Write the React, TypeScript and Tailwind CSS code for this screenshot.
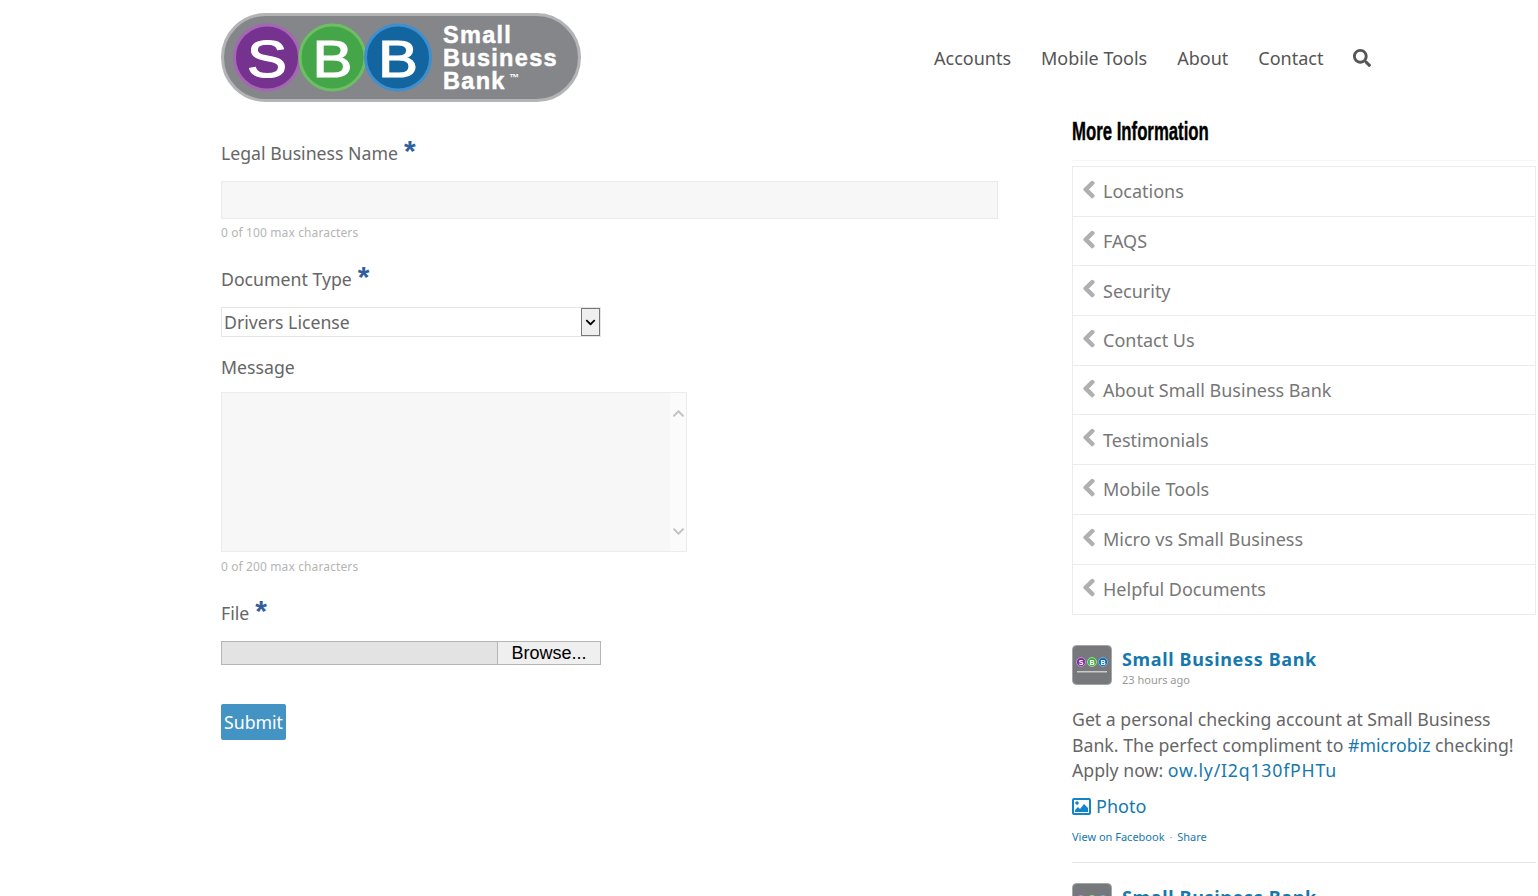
import { FaChevronLeft, FaChevronDown, FaChevronUp, FaSearch } from "react-icons/fa";

const navItems = ["Accounts", "Mobile Tools", "About", "Contact"];
const sideLinks = [
  "Locations",
  "FAQS",
  "Security",
  "Contact Us",
  "About Small Business Bank",
  "Testimonials",
  "Mobile Tools",
  "Micro vs Small Business",
  "Helpful Documents",
];

function Logo() {
  const circles = [
    { cx: 46, fill: "#75328f", ring: "#a765b5", letter: "S" },
    { cx: 111.5, fill: "#44a648", ring: "#6cc063", letter: "B" },
    { cx: 177, fill: "#12659f", ring: "#3f8fcf", letter: "B" },
  ];
  return (
    <svg width="360" height="89" viewBox="0 0 360 89" className="block">
      <rect x="1.5" y="1.5" width="357" height="86" rx="43" fill="#848689" stroke="#b3b4b6" strokeWidth="3" />
      {circles.map((c) => (
        <g key={c.cx}>
          <circle cx={c.cx} cy="44.5" r="32.5" fill={c.fill} stroke={c.ring} strokeWidth="3" />
          <text
            x={c.cx}
            y="63.5"
            textAnchor="middle"
            fontFamily="'Liberation Sans', sans-serif"
            fontSize="52"
            fill="#fff"
            stroke="#fff"
            strokeWidth="1.2"
            textLength="40"
            lengthAdjust="spacingAndGlyphs"
          >
            {c.letter}
          </text>
        </g>
      ))}
      <g fontFamily="'Liberation Sans', sans-serif" fontWeight="700" fontSize="23.5" letterSpacing="1.3" fill="#fff" stroke="#fff" strokeWidth="0.5">
        <text x="222" y="30">Small</text>
        <text x="222" y="53">Business</text>
        <text x="222" y="75.5">Bank</text>
      </g>
      <text x="288" y="68" fontFamily="'Liberation Sans', sans-serif" fontWeight="700" fontSize="10" fill="#fff">™</text>
    </svg>
  );
}

function Avatar() {
  return (
    <svg width="40" height="40" viewBox="0 0 40 40" className="block shrink-0">
      <rect x="0.5" y="0.5" width="39" height="39" rx="4" fill="#77787b" stroke="#a5a6a8" />
      <g fontFamily="'Liberation Sans', sans-serif" fontSize="7" fontWeight="700" fill="#fff" textAnchor="middle">
        <circle cx="9" cy="17" r="4.5" fill="#75328f" stroke="#c98ad6" />
        <text x="9" y="19.5">S</text>
        <circle cx="20" cy="17" r="4.5" fill="#44a648" stroke="#9be08f" />
        <text x="20" y="19.5">B</text>
        <circle cx="31" cy="17" r="4.5" fill="#12659f" stroke="#6cb5e8" />
        <text x="31" y="19.5">B</text>
      </g>
      <rect x="5" y="26" width="30" height="1.5" fill="#c9cacc" />
    </svg>
  );
}

function PhotoIcon() {
  return (
    <svg width="19" height="17" viewBox="0 0 19 17" className="mr-[5px] block shrink-0">
      <rect x="1" y="1" width="17" height="15" rx="1" fill="none" stroke="#1384c9" strokeWidth="2" />
      <circle cx="5" cy="5" r="1.8" fill="#1384c9" />
      <path d="M3 14 L3 12 L6 9 L8 11 L12 6 L16 10 L16 14 Z" fill="#1384c9" />
    </svg>
  );
}

function Label({ text, required }: { text: string; required?: boolean }) {
  return (
    <label className="flex items-start text-[17.7px] leading-[26px] text-[#666]">
      <span className="mt-[4px]">{text}</span>
      {required && (
        <span className="ml-[6px] h-[28px] font-['Liberation_Sans',sans-serif] text-[30px] font-bold leading-[30px] text-[#2f5f9e]">
          *
        </span>
      )}
    </label>
  );
}

function Hint({ text, className }: { text: string; className: string }) {
  return <p className={`${className} text-[12px] leading-[16px] tracking-[0.12px] text-[#b5b5b5]`}>{text}</p>;
}

export default function App() {
  return (
    <div className="h-[896px] overflow-hidden bg-white pl-[221px] font-['Noto_Sans',sans-serif] text-[#666]">
      <header className="flex h-[115px] items-start pt-[13px]">
        <Logo />
        <nav className="ml-[353px] mt-[31px] flex items-center text-[18px] leading-[28px] text-[#555]">
          {navItems.map((item) => (
            <a key={item} className="mr-[30px]">{item}</a>
          ))}
          <FaSearch className="h-[18px] w-[18px] text-[#555]" />
        </nav>
      </header>

      <main className="flex">
        <form className="w-[777px] shrink-0 pt-[21px]">
          <Label text="Legal Business Name" required />
          <input className="mt-[15px] block h-[38px] w-full border border-[#eaeaea] bg-[#f7f7f7]" />
          <Hint text="0 of 100 max characters" className="mt-[6px]" />

          <div className="mt-[21px]">
            <Label text="Document Type" required />
          </div>
          <div className="mt-[15px] flex h-[30px] w-[380px] items-center border border-[#e5e5e5]">
            <select className="h-full min-w-0 flex-1 appearance-none bg-white pl-[2px] text-[17.7px] text-[#666]">
              <option>Drivers License</option>
            </select>
            <span className="flex h-[28px] w-[19px] items-center justify-center border border-[#777] bg-[#efefef]">
              <FaChevronDown className="h-[11px] w-[11px] text-black" />
            </span>
          </div>

          <div className="mt-[13px]">
            <Label text="Message" />
          </div>
          <div className="mt-[12px] flex h-[160px] w-[466px] border border-[#ececec]">
            <textarea className="h-full min-w-0 flex-1 resize-none bg-[#f7f7f7]" />
            <div className="flex w-[16px] flex-col items-center justify-between bg-[#fbfbfb] pb-[13px] pt-[14px]">
              <FaChevronUp className="h-[13px] w-[13px] text-[#c4c4c4]" />
              <FaChevronDown className="h-[13px] w-[13px] text-[#c4c4c4]" />
            </div>
          </div>
          <Hint text="0 of 200 max characters" className="mt-[7px]" />

          <div className="mt-[21px]">
            <Label text="File" required />
          </div>
          <div className="mt-[15px] flex h-[24px] w-[380px] border border-[#b5b5b5]">
            <div className="flex-1 bg-[#e3e3e3]" />
            <button type="button" className="w-[103px] border-l border-[#b5b5b5] bg-[#efefef] font-['Liberation_Sans',sans-serif] text-[18px] leading-[22px] text-black">
              Browse...
            </button>
          </div>

          <button type="button" className="mt-[39px] block h-[36px] w-[65px] rounded-[2px] bg-[#4394c4] text-[17.7px] text-white">
            Submit
          </button>
        </form>

        <aside className="ml-[74px] w-[464px] shrink-0">
          <h2 className="mt-[1px] h-[31px] origin-left scale-x-[0.67] whitespace-nowrap font-['Liberation_Sans',sans-serif] text-[25px] font-bold leading-[31px] text-black [-webkit-text-stroke:0.4px_black]">
            More Information
          </h2>
          <div className="mt-[13px] border-t border-[#f6f6f6] pt-[5px]">
            <ul className="border border-[#ececec]">
              {sideLinks.map((link) => (
                <li key={link} className="flex h-[49.7px] items-center border-b border-[#ececec] pl-[9px] pt-[1px] text-[18px] text-[#777] last:border-b-0">
                  <FaChevronLeft className="mr-[7px] mt-[-5px] h-[19px] w-[14px] stroke-[40px] text-[#b0b0b0]" />
                  {link}
                </li>
              ))}
            </ul>
          </div>

          <article className="mt-[30px] border-b border-[#e5e5e5] pb-[17px]">
            <div className="flex">
              <Avatar />
              <div className="ml-[10px]">
                <p className="mt-[-1px] text-[18px] font-bold leading-[30px] tracking-[0.65px] text-[#1678ad]">Small Business Bank</p>
                <p className="text-[11px] leading-[12px] text-[#999]">23 hours ago</p>
              </div>
            </div>
            <p className="mt-[21px] text-[17.7px] leading-[25.5px] text-[#666]">
              Get a personal checking account at Small Business Bank. The perfect compliment to{" "}
              <a className="text-[#1678ad]">#microbiz</a> checking! Apply now:{" "}
              <a className="tracking-[0.8px] text-[#1678ad]">ow.ly/I2q130fPHTu</a>
            </p>
            <p className="mt-[10px] flex items-center text-[18px] leading-[25px] text-[#1678ad]">
              <PhotoIcon />
              Photo
            </p>
            <p className="mt-[10px] text-[11px] leading-[16px] text-[#1678ad]">
              View on Facebook <span className="mx-[2px] text-[#999]">·</span> Share
            </p>
          </article>

          <article className="mt-[20px] flex">
            <Avatar />
            <p className="ml-[10px] mt-[-1px] text-[18px] font-bold leading-[30px] tracking-[0.65px] text-[#1678ad]">Small Business Bank</p>
          </article>
        </aside>
      </main>
    </div>
  );
}
